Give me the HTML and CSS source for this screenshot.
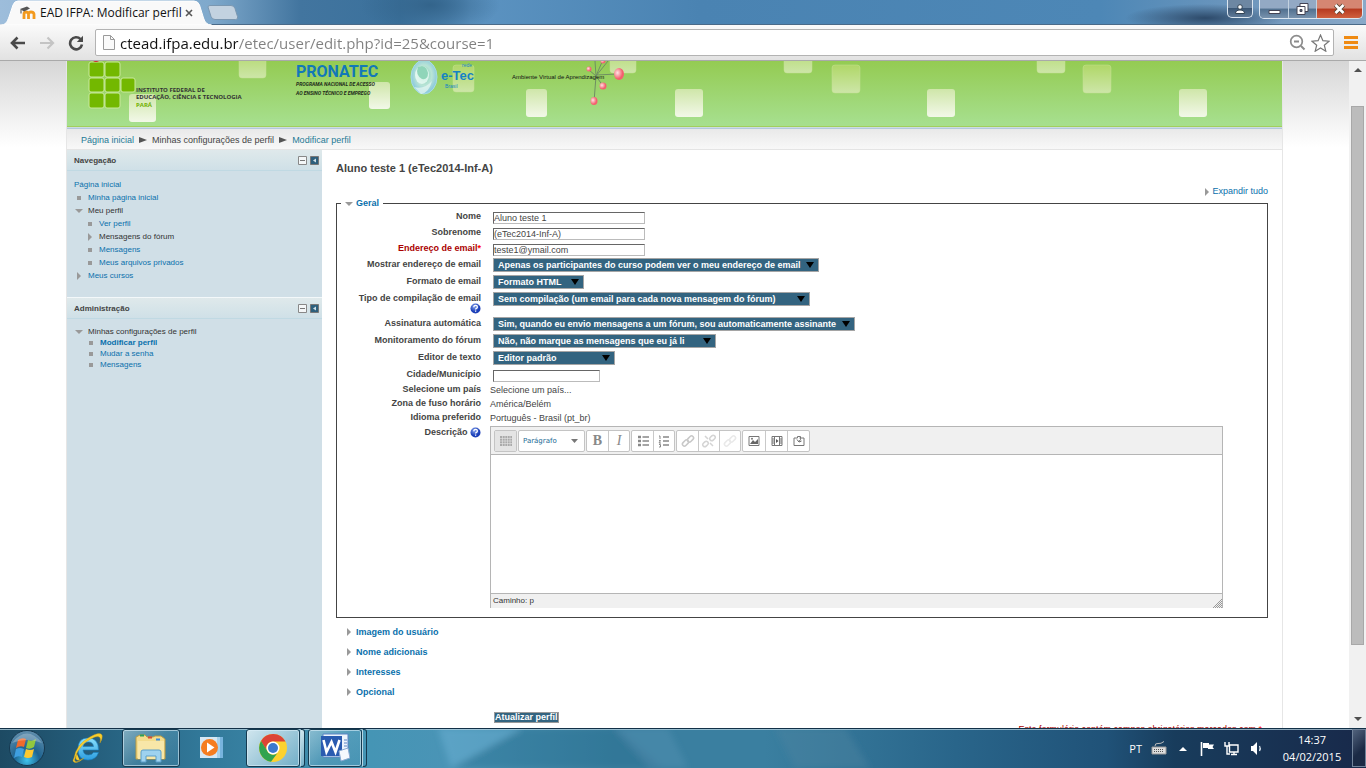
FILE: index.html
```html
<!DOCTYPE html>
<html lang="pt-BR">
<head>
<meta charset="utf-8">
<title>EAD IFPA: Modificar perfil</title>
<link rel="stylesheet" href="styles.css">
</head>
<body>
<svg class="defs" width="0" height="0" aria-hidden="true">
  <defs>
    <linearGradient id="sqSoft" x1="0" y1="0" x2="0" y2="1"><stop offset="0" stop-color="#b0d768"/><stop offset="1" stop-color="#cde6a8"/></linearGradient>
    <linearGradient id="sqBright" x1="0" y1="0" x2="0" y2="1"><stop offset="0" stop-color="#cfe6a9"/><stop offset="1" stop-color="#f2f8e8"/></linearGradient>
    <radialGradient id="pink" cx=".35" cy=".4"><stop offset="0" stop-color="#ffe3e5"/><stop offset="1" stop-color="#f4606e"/></radialGradient>
    <radialGradient id="globe" cx=".5" cy=".45"><stop offset="0" stop-color="#7fd0b4"/><stop offset=".6" stop-color="#b9e4d6"/><stop offset="1" stop-color="#8ecbdc"/></radialGradient>
    <radialGradient id="orb" cx=".5" cy=".85" r=".8"><stop offset="0" stop-color="#3fc4ee"/><stop offset=".45" stop-color="#1d6390"/><stop offset="1" stop-color="#5c8baa"/></radialGradient>
    <linearGradient id="ieBlue" x1="0" y1="0" x2="0" y2="1"><stop offset="0" stop-color="#8be0fb"/><stop offset="1" stop-color="#2b9de0"/></linearGradient>
    <radialGradient id="helpBlue" cx=".4" cy=".3"><stop offset="0" stop-color="#86a4ee"/><stop offset="1" stop-color="#1b3fb8"/></radialGradient>
    <symbol id="help" viewBox="0 0 11 11"><circle cx="5.500" cy="5.500" r="5" fill="url(#helpBlue)"/><path d="M3.700 4.200q.2-1.800 1.900-1.800t1.800 1.600q0 .9-1 1.400-.8.400-.8 1.100M5.600 7.500v1.300" fill="none" stroke="#fff" stroke-width="1.300"/></symbol>
    <symbol id="tri-down" viewBox="0 0 8 8"><path d="M0 2h8L4 6z" fill="#999"/></symbol>
    <symbol id="tri-right" viewBox="0 0 8 8"><path d="M2 0v8l4-4z" fill="#999"/></symbol>
    <symbol id="dot" viewBox="0 0 8 8"><path d="M2 2h4v4H2z" fill="#999"/></symbol>
    <symbol id="min" viewBox="0 0 9 9"><path d="M.5.500h8v8h-8z" fill="#f4f7f8" stroke="#888"/><path d="M2 4.500h5" stroke="#777"/></symbol>
    <symbol id="dock" viewBox="0 0 9 9"><path d="M.5.500h8v8h-8z" fill="#2d5f7c" stroke="#777"/><path d="M6 2.500v4l-3-2z" fill="#cfe0e8"/></symbol>
  </defs>
</svg>

<header class="titlebar">
  <div class="tab">
    <svg class="tab-shape" viewBox="0 0 213 25" preserveAspectRatio="none"><path d="M0 25c6 0 7-3 9-8l4-12q1.500-4 5-4h176q4 0 5.500 4l4 13q2 7 8 7z" fill="#f9f9f9" stroke="#fff"/></svg>
    <svg class="moodle" viewBox="0 0 16 14"><path d="M4 13V8q0-2 2-2t2.500 2v5M8.500 8q0-2 2.500-2T14 8v5" fill="none" stroke="#f39a1e" stroke-width="2.800"/><path d="M0 3L7 .5l3 2-6 3z" fill="#555"/><path d="M1 3.500v4" stroke="#444"/></svg>
    <span class="tab-title">EAD IFPA: Modificar perfil</span>
    <button class="tab-close" aria-label="Fechar guia"><svg width="8" height="8" viewBox="0 0 8 8"><path d="M1 1l6 6M7 1L1 7" stroke="#555" stroke-width="1.600"/></svg></button>
  </div>
  <button class="new-tab" aria-label="Nova guia"><svg width="32" height="15" viewBox="0 0 32 15"><path d="M1 2Q1 .5 3 .5h21q3 0 4 3l2.500 8q1 3-2 3H8q-3 0-4-3z" fill="#c3d2e0" stroke="#7a97b1"/></svg></button>
  <div class="win-buttons">
    <button class="win user" aria-label="Usuário"><svg width="12" height="12" viewBox="0 0 12 12"><circle cx="6" cy="4" r="2.300" fill="#fff" stroke="#345"/><path d="M1.500 10.500q0-3.500 4.500-3.500t4.500 3.500z" fill="#fff" stroke="#345"/></svg></button>
    <div class="win-group">
      <button class="win" aria-label="Minimizar"><svg width="13" height="12" viewBox="0 0 13 12"><path d="M1 7.500h11v3H1z" fill="#fff" stroke="#445"/></svg></button>
      <button class="win" aria-label="Restaurar"><svg width="13" height="12" viewBox="0 0 13 12"><path d="M4 .5h8v8H4z" fill="#fff" stroke="#445"/><path d="M1 3.500h8v8H1z" fill="#fff" stroke="#445"/><path d="M4 6.500h2v2H4z" fill="#567" stroke="#445"/></svg></button>
      <button class="win close" aria-label="Fechar"><svg width="13" height="12" viewBox="0 0 13 12"><path d="M2.500 2l8 8M10.500 2l-8 8" stroke="#543" stroke-width="4.500"/><path d="M2.500 2l8 8M10.500 2l-8 8" stroke="#fff" stroke-width="2.600"/></svg></button>
    </div>
  </div>
</header>

<nav class="toolbar">
  <button class="tool" aria-label="Voltar"><svg width="16" height="14" viewBox="0 0 16 14"><path d="M7.500 1.500L2 7l5.500 5.500M2.500 7H15" fill="none" stroke="#4a4a4a" stroke-width="2.600"/></svg></button>
  <button class="tool" aria-label="Avançar"><svg width="16" height="14" viewBox="0 0 16 14"><path d="M8.500 1.500L14 7l-5.500 5.500M13.500 7H1" fill="none" stroke="#c4c4c4" stroke-width="2.200"/></svg></button>
  <button class="tool" aria-label="Recarregar"><svg width="16" height="16" viewBox="0 0 16 16"><path d="M12.500 4.200A6 6 0 1 0 14 9.500" fill="none" stroke="#4a4a4a" stroke-width="2.600"/><path d="M15 .8V7H8.800z" fill="#4a4a4a"/></svg></button>
  <div class="omnibox">
    <svg width="12" height="15" viewBox="0 0 12 15"><path d="M.5.500h7l4 4v10H.5z" fill="#fafafa" stroke="#9a9a9a"/><path d="M7.500.5v4h4" fill="none" stroke="#9a9a9a"/></svg>
    <input class="url" type="text" aria-label="Endereço" value="ctead.ifpa.edu.br/etec/user/edit.php?id=25&amp;course=1">
    <svg width="17" height="17" viewBox="0 0 17 17"><circle cx="7.500" cy="7.500" r="5.800" fill="none" stroke="#8c8c8c" stroke-width="1.700"/><path d="M5 7.500h5M12 12l3.500 3.500" stroke="#8c8c8c" stroke-width="2"/></svg>
    <svg width="19" height="18" viewBox="0 0 19 18"><path d="M9.500 1l2.400 5.700 6.100.5-4.700 4 1.500 6-5.300-3.300L4.200 17.200l1.500-6-4.700-4 6.100-.5z" fill="#fff" stroke="#777" stroke-width="1.200"/></svg>
  </div>
  <button class="tool menu" aria-label="Menu"><svg width="14" height="13" viewBox="0 0 14 13"><path d="M0 1.500h14M0 6.500h14M0 11.500h14" stroke="#ef8a12" stroke-width="3"/></svg></button>
</nav>

<div class="viewport">
  <div class="page">
    <div class="container">
      <div class="banner">
        <svg class="banner-art" width="1215" height="66" viewBox="0 0 1215 66">
          <g fill="url(#sqSoft)" stroke="#c5e193" stroke-opacity=".5">
            <rect x="172" y="-11" width="27" height="28" rx="3"/><rect x="386" y="4" width="21" height="27" rx="3"/><rect x="543" y="-16" width="26" height="28" rx="3"/><rect x="717" y="-16" width="28" height="28" rx="3"/><rect x="765" y="4" width="28" height="28" rx="3"/><rect x="970" y="-16" width="28" height="28" rx="3"/><rect x="1016" y="4" width="28" height="28" rx="3"/>
          </g>
          <g fill="url(#sqBright)">
            <rect x="62" y="33" width="27" height="28" rx="3"/><rect x="302" y="21" width="21" height="27" rx="3"/><rect x="459" y="28" width="21" height="28" rx="3"/><rect x="608" y="28" width="28" height="28" rx="3"/><rect x="860" y="28" width="28" height="28" rx="3"/><rect x="1112" y="28" width="28" height="28" rx="3"/>
          </g>
          <g fill="#73b800" stroke="#c9e99c" stroke-width="1">
            <rect x="22" y="1" width="15" height="15" rx="2"/><rect x="38" y="1" width="15" height="15" rx="2"/><rect x="22" y="17" width="15" height="14" rx="2"/><rect x="38" y="17" width="15" height="14" rx="2"/><rect x="54" y="17" width="14" height="14" rx="2"/><rect x="22" y="32" width="15" height="15" rx="2"/><rect x="38" y="32" width="15" height="15" rx="2"/>
          </g>
          <path d="M26 0q3 2 6 0z" fill="#d3262c"/>
          <g class="if-text"><text x="69" y="31">INSTITUTO FEDERAL DE</text><text x="69" y="38">EDUCAÇÃO, CIÊNCIA E TECNOLOGIA</text><text x="69" y="46" class="para">PARÁ</text></g>
          <text class="pronatec" x="229" y="16">PRONATEC</text>
          <g class="pro-sub"><text x="229" y="25">PROGRAMA NACIONAL DE ACESSO</text><text x="229" y="34">AO ENSINO TÉCNICO E EMPREGO</text></g>
          <ellipse cx="357" cy="16" rx="13" ry="17" fill="url(#globe)" stroke="#a6dbe4"/>
          <ellipse cx="355" cy="14" rx="7" ry="9" fill="#f4fffb" opacity=".7"/>
          <path d="M351 6q-3 8 4 12 6 1 6-6-1-6-6-7z" fill="#8fd5b9"/>
          <path d="M347 26q10 3 18-6-3 12-11 13z" fill="#e9f9f4" opacity=".7"/>
          <text class="etec" x="374" y="19">e-Tec</text><text class="rede" x="395" y="6">rede</text><text class="rede" x="378" y="27">Brasil</text>
          <g stroke="#6f8f62" fill="none"><path d="M529 15L528 0M529 15l6-14M529 15L541 0M529 15l-7-6M529 14l22-1M529 15l7 10M529 15l-2 26"/></g>
          <g fill="url(#pink)"><circle cx="522" cy="8" r="2.500"/><circle cx="536" cy="0" r="2.500"/><ellipse cx="552" cy="13" rx="5" ry="6"/><circle cx="536" cy="25" r="3.500"/><ellipse cx="527" cy="40" rx="3.500" ry="4"/></g>
          <text class="ava" x="445" y="18">Ambiente Virtual de Aprendizagem</text>
        </svg>
      </div>
      <div class="breadcrumb"><a href="#">Página inicial</a><svg width="8" height="6" viewBox="0 0 8 6"><path d="M0 0l8 3-8 3z"/></svg><span>Minhas configurações de perfil</span><svg width="8" height="6" viewBox="0 0 8 6"><path d="M0 0l8 3-8 3z"/></svg><a href="#">Modificar perfil</a></div>
      <div class="columns">
        <aside class="sidebar">
          <section class="block nav-block">
            <h2>Navegação<span class="acts"><svg><use href="#min"/></svg><svg><use href="#dock"/></svg></span></h2>
            <ul class="tree">
              <li><a href="#">Página inicial</a></li>
              <li class="l1"><svg><use href="#dot"/></svg><a href="#">Minha página inicial</a></li>
              <li class="l1"><svg><use href="#tri-down"/></svg><span>Meu perfil</span></li>
              <li class="l2"><svg><use href="#dot"/></svg><a href="#">Ver perfil</a></li>
              <li class="l2"><svg><use href="#tri-right"/></svg><span>Mensagens do fórum</span></li>
              <li class="l2"><svg><use href="#dot"/></svg><a href="#">Mensagens</a></li>
              <li class="l2"><svg><use href="#dot"/></svg><a href="#">Meus arquivos privados</a></li>
              <li class="l1"><svg><use href="#tri-right"/></svg><a href="#">Meus cursos</a></li>
            </ul>
          </section>
          <section class="block">
            <h2>Administração<span class="acts"><svg><use href="#min"/></svg><svg><use href="#dock"/></svg></span></h2>
            <ul class="tree tight">
              <li class="l1"><svg><use href="#tri-down"/></svg><span>Minhas configurações de perfil</span></li>
              <li class="l2"><svg><use href="#dot"/></svg><a href="#"><b>Modificar perfil</b></a></li>
              <li class="l2"><svg><use href="#dot"/></svg><a href="#">Mudar a senha</a></li>
              <li class="l2"><svg><use href="#dot"/></svg><a href="#">Mensagens</a></li>
            </ul>
          </section>
        </aside>
        <main class="main">
          <h1>Aluno teste 1 (eTec2014-Inf-A)</h1>
          <div class="expand"><svg><use href="#tri-right"/></svg><a href="#">Expandir tudo</a></div>
          <form>
            <fieldset>
              <legend><svg><use href="#tri-down"/></svg><a href="#">Geral</a></legend>
              <div class="row"><label for="nome">Nome</label><input id="nome" type="text" value="Aluno teste 1"></div>
              <div class="row"><label for="sobrenome">Sobrenome</label><input id="sobrenome" type="text" value="(eTec2014-Inf-A)"></div>
              <div class="row"><label for="email" class="required">Endereço de email<span class="star">*</span></label><input id="email" type="text" value="teste1@ymail.com"></div>
              <div class="row sel"><label for="mostrar">Mostrar endereço de email</label><span class="select w320"><select id="mostrar"><option>Apenas os participantes do curso podem ver o meu endereço de email</option></select></span></div>
              <div class="row sel"><label for="formato">Formato de email</label><span class="select w90"><select id="formato"><option>Formato HTML</option></select></span></div>
              <div class="row sel tall"><label for="tipo">Tipo de compilação de email<svg class="help"><use href="#help"/></svg></label><span class="select w317"><select id="tipo"><option>Sem compilação (um email para cada nova mensagem do fórum)</option></select></span></div>
              <div class="row sel"><label for="assin">Assinatura automática</label><span class="select w357"><select id="assin"><option>Sim, quando eu envio mensagens a um fórum, sou automaticamente assinante</option></select></span></div>
              <div class="row sel"><label for="monit">Monitoramento do fórum</label><span class="select w224"><select id="monit"><option>Não, não marque as mensagens que eu já li</option></select></span></div>
              <div class="row sel"><label for="editor">Editor de texto</label><span class="select w122"><select id="editor"><option>Editor padrão</option></select></span></div>
              <div class="row city"><label for="cidade">Cidade/Município</label><input id="cidade" class="short" type="text"></div>
              <div class="row text"><b>Selecione um país</b><span>Selecione um país...</span></div>
              <div class="row text"><b>Zona de fuso horário</b><span>América/Belém</span></div>
              <div class="row text"><b>Idioma preferido</b><span>Português - Brasil (pt_br)</span></div>
              <div class="row desc"><label for="desc">Descrição <svg class="help"><use href="#help"/></svg></label>
                <div class="editor">
                  <div class="ed-tools">
                    <div class="grp"><button type="button" class="on" aria-label="Alternar barra"><svg viewBox="0 0 16 16"><path d="M2 3h12v10H2z" fill="#aaa"/><path d="M2 5.500h12M2 8h12M2 10.500h12M4.500 3v10M7 3v10M9.500 3v10M12 3v10" stroke="#e6e6e6" stroke-width=".6"/></svg></button></div>
                    <div class="grp"><button type="button" class="para">Parágrafo<svg width="7" height="4" viewBox="0 0 7 4"><path d="M0 0h7L3.500 4z" fill="#777"/></svg></button></div>
                    <div class="grp"><button type="button" class="serif"><b>B</b></button><button type="button" class="serif"><i>I</i></button></div>
                    <div class="grp"><button type="button" aria-label="Lista"><svg viewBox="0 0 16 16"><path d="M3 4h3M3 8h3M3 12h3" stroke="#888" stroke-width="2.500"/><path d="M7.500 4H14M7.500 8H14M7.500 12H14" stroke="#888" stroke-width="1.400"/></svg></button><button type="button" aria-label="Lista numerada"><svg viewBox="0 0 16 16"><path d="M3 3h1v3M3 7.500h1.500L3 10h2M3 11.500h1.500V14H3" fill="none" stroke="#888"/><path d="M7 4h6M7 8h6M7 12h6" stroke="#888" stroke-width="1.400"/></svg></button></div>
                    <div class="grp"><button type="button" aria-label="Link"><svg viewBox="0 0 16 16"><g fill="none" stroke="#c8c8c8" stroke-width="1.500"><rect x="2" y="8" width="7" height="4" rx="2" transform="rotate(-45 5.500 10)"/><rect x="7" y="4" width="7" height="4" rx="2" transform="rotate(-45 10.500 6)"/></g></svg></button><button type="button" aria-label="Remover link"><svg viewBox="0 0 16 16"><g fill="none" stroke="#d4d4d4" stroke-width="1.500"><rect x="1.500" y="9" width="6" height="4" rx="2" transform="rotate(-45 4.500 11)"/><rect x="8.500" y="3" width="6" height="4" rx="2" transform="rotate(-45 11.500 5)"/><path d="M4 3l3 3M9 10l3 3"/></g></svg></button><button type="button" aria-label="Impedir link"><svg viewBox="0 0 16 16"><g fill="none" stroke="#e9e9e9" stroke-width="1.500"><rect x="2" y="8" width="7" height="4" rx="2" transform="rotate(-45 5.500 10)"/><rect x="7" y="4" width="7" height="4" rx="2" transform="rotate(-45 10.500 6)"/></g></svg></button></div>
                    <div class="grp wide"><button type="button" aria-label="Imagem"><svg viewBox="0 0 16 16"><path d="M3 3.500h10v9H3z" fill="#fff" stroke="#777"/><path d="M4 11l3-4 2 2 3-3v5z" fill="#666"/><circle cx="6" cy="5.700" r="1" fill="#777"/></svg></button><button type="button" aria-label="Mídia"><svg viewBox="0 0 16 16"><path d="M3 3.500h10v9H3zM5.500 3.500v9M10.500 3.500v9" fill="#fff" stroke="#777"/><path d="M3 6h2M3 8h2M3 10h2M11 6h2M11 8h2M11 10h2" stroke="#777"/><path d="M7 6l2.500 2L7 10z" fill="#555"/></svg></button><button type="button" aria-label="Arquivos"><svg viewBox="0 0 16 16"><path d="M3 5h3.500V3.500h3V5H13v7.500H3z" fill="#fff" stroke="#777"/><path d="M8 8.500q2.500-2 1-4M6 6.500l2 2.500 2.500-1" fill="none" stroke="#666"/></svg></button></div>
                  </div>
                  <textarea id="desc"></textarea>
                  <div class="ed-status">Caminho: p<svg width="9" height="9" viewBox="0 0 9 9"><path d="M0 8.500h9M2 6.500h7M4 4.500h5M6 2.500h3M8 .5h1M1 7.500h8M3 5.500h6M5 3.500h4M7 1.500h2" stroke="#999" stroke-dasharray="1 1"/></svg></div>
                </div>
              </div>
            </fieldset>
            <div class="more"><svg><use href="#tri-right"/></svg><a href="#">Imagem do usuário</a></div>
            <div class="more"><svg><use href="#tri-right"/></svg><a href="#">Nome adicionais</a></div>
            <div class="more"><svg><use href="#tri-right"/></svg><a href="#">Interesses</a></div>
            <div class="more"><svg><use href="#tri-right"/></svg><a href="#">Opcional</a></div>
            <button class="submit" type="submit">Atualizar perfil</button>
            <p class="note">Este formulário contém campos obrigatórios marcados com <span class="star">*</span></p>
          </form>
        </main>
      </div>
    </div>
  </div>
  <div class="scroll" aria-hidden="true">
    <svg width="8" height="4" viewBox="0 0 8 4"><path d="M0 4h8L4 0z" fill="#505050"/></svg>
    <div class="track"><div class="thumb"></div></div>
    <svg width="8" height="4" viewBox="0 0 8 4"><path d="M0 0h8L4 4z" fill="#505050"/></svg>
  </div>
</div>

<footer class="taskbar">
  <svg class="wall" viewBox="0 0 1366 40" preserveAspectRatio="none">
    <defs><linearGradient id="tb"><stop offset="0" stop-color="#1d4a63"/><stop offset=".07" stop-color="#255f7d"/><stop offset=".15" stop-color="#32799a"/><stop offset=".27" stop-color="#4595b5"/><stop offset=".33" stop-color="#4a94b6"/><stop offset=".45" stop-color="#3a7fa0"/><stop offset=".56" stop-color="#3a7fa0"/><stop offset=".7" stop-color="#29658a"/><stop offset=".81" stop-color="#205278"/><stop offset=".86" stop-color="#183c5c"/><stop offset="1" stop-color="#18294a"/></linearGradient><filter id="soft"><feGaussianBlur stdDeviation="3"/></filter></defs>
    <path d="M0 0h1366v40H0z" fill="url(#tb)"/>
    <g filter="url(#soft)"><path d="M438 0h85l-68 40h-4z" fill="#6bb1d3" opacity=".5"/><path d="M523 0h95l45 40H450z" fill="#246584" opacity=".3"/><path d="M613 0h55l20 40h-38z" fill="#5b96b8" opacity=".35"/><path d="M775 0h70l25 40h-75z" fill="#5084a0" opacity=".4"/></g>
    <path d="M0 .5h1366" stroke="#123047"/><path d="M0 1.500h1366" stroke="#b5d1df" stroke-opacity=".75"/>
  </svg>
  <button class="task orb" aria-label="Iniciar"><svg width="38" height="38" viewBox="0 0 38 38"><circle cx="19" cy="19" r="17.500" fill="url(#orb)" stroke="#15384f"/><path d="M10 11q4-3 8-1l-2 8q-4-2-8 1z" fill="#f06a2c"/><path d="M20 11q4 2 8-1l-2 8q-4 3-8 1z" fill="#92c83e"/><path d="M8 20q4-2 8 0l-2 8q-4-2-8 1z" fill="#3f9fe0"/><path d="M18 20q4 2 8 0l-2 8q-4 2-8 0z" fill="#fcc930"/><path d="M4 14Q19-5 34 14q-15-6-30 0z" fill="#fff" opacity=".25"/></svg></button>
  <button class="task ie" aria-label="Internet Explorer"><svg width="32" height="32" viewBox="0 0 32 32"><path d="M26.500 18H11q.5 5 5.500 5 3.500 0 5-2.500h5Q24 28 16 28 6 28 6 17T16 6q10.500 0 10.500 12zM11 14.500h10.500q-.5-4.500-5-4.500T11 14.500z" fill="url(#ieBlue)" stroke="#1680c2" stroke-width=".6"/><path d="M5 22q-6 10 3 7M2 26Q4 13 17 5.500 28-1 30 3q1 3-2 8 2-8-5-6Q12 9 6 19q-3 5-2 8 2 3 8-1-7 6-10 4-2-1 0-4z" fill="#f9cf2d" stroke="#c99916" stroke-width=".4"/></svg></button>
  <button class="task open" aria-label="Explorador"><svg width="34" height="30" viewBox="0 0 34 30"><path d="M2 4l4-2h5l2 2h6l2-1h6l4 3v20H2z" fill="#f3dc8c" stroke="#b99a42"/><path d="M4 8h26v18H4z" fill="#f8e7a8"/><path d="M6 2.500h4" stroke="#2b9f58" stroke-width="2"/><path d="M14 4.500h4" stroke="#d44b38" stroke-width="2"/><path d="M22 6.500h4" stroke="#3c8ddb" stroke-width="2"/><path d="M7 29V19q0-2 2-2h16q2 0 2 2v10h-5v-6H12v6z" fill="#9ed2ef" stroke="#5b9ec9"/></svg></button>
  <button class="task wmp" aria-label="Media Player"><svg width="28" height="26" viewBox="0 0 28 26"><path d="M9 2h15v21H9z" fill="#78b4de"/><path d="M5 2h16v21H5z" fill="#a8d2ec"/><path d="M1 2h17v21H1z" fill="#d6e8f4"/><circle cx="10.500" cy="12.500" r="8.500" fill="#f57d20"/><path d="M8 7.500v10l7.500-5z" fill="#fff"/></svg></button>
  <button class="task open active" aria-label="Chrome"><svg width="30" height="30" viewBox="0 0 30 30"><circle cx="15" cy="15" r="14" fill="#fcd22f"/><path d="M3 8A14 14 0 0 1 27.500 8.500H15A6.500 6.500 0 0 0 9 18z" fill="#dc4336"/><path d="M3 8a14 14 0 0 0 10 20.800L19.500 20A6.500 6.500 0 0 1 9 17.500z" fill="#31a350"/><circle cx="15" cy="15" r="6.500" fill="#fff"/><circle cx="15" cy="15" r="5" fill="#3b79cf"/></svg></button>
  <span class="stack active"></span>
  <button class="task open word" aria-label="Word"><svg width="30" height="30" viewBox="0 0 30 30"><path d="M3 1h25v23H3z" fill="#eef4fc" stroke="#5a84c4"/><path d="M1 3h21v20H1z" fill="#2a5bb0"/><path d="M3.500 7l3 12 5-10 4 10 4-12" fill="none" stroke="#fff" stroke-width="2.600"/><path d="M24 7h3M24 10h3M24 13h3" stroke="#5a84c4"/><path d="M19 18l9-3 2 10-9 3z" fill="#f5f8fd" stroke="#8aa9d3"/></svg></button>
  <span class="stack"></span>
  <div class="tray">
    <span class="lang">PT</span>
    <svg width="16" height="14" viewBox="0 0 16 14"><path d="M1 6h14v7H1z" fill="#ddd" stroke="#999"/><path d="M3 8.500h10M3 10.500h10" stroke="#555" stroke-dasharray="1 1"/><path d="M4 5q0-3 3-2.500t6-2" fill="none" stroke="#bbb"/></svg>
    <svg class="up" width="8" height="4" viewBox="0 0 8 4"><path d="M0 4h8L4 0z" fill="#fff"/></svg>
    <svg width="16" height="15" viewBox="0 0 16 15"><path d="M2.500 1v14" stroke="#fff" stroke-width="1.600"/><path d="M4 2h6v1.500h5L13.500 6l1.500 2H9V7H4z" fill="#fff"/></svg>
    <svg width="16" height="15" viewBox="0 0 16 15"><path d="M5.500 4H14v7H5.500zM7 13.500h6M10 11v2M1 1v4h4V1M3 5v8h3" fill="none" stroke="#fff" stroke-width="1.400"/></svg>
    <svg width="15" height="15" viewBox="0 0 15 15"><path d="M2 5h2l4-4v13L4 10H2z" fill="#fff"/><path d="M10.500 5q1.500 2.500 0 5" fill="none" stroke="#dde6ee" stroke-width="1.300"/></svg>
    <div class="clock"><span>14:37</span><span>04/02/2015</span></div>
    <button class="show" aria-label="Mostrar área de trabalho"></button>
  </div>
</footer>
</body>
</html>
```
FILE: styles.css
```css
* { box-sizing: border-box; }
html, body { height: 100%; margin: 0; }
body {
  display: flex; flex-direction: column; overflow: hidden;
  font-family: "Liberation Sans", Arial, sans-serif; font-size: 9px; line-height: 13px;
  color: #444; background: #fff;
}
svg { flex: none; display: block; }
.defs { position: absolute; }
button { font: inherit; border: 0; background: none; padding: 0; margin: 0; color: inherit; display: flex; align-items: center; justify-content: center; }
a { color: #0a70ac; text-decoration: none; }

/* window title bar */
.titlebar {
  flex: none; height: 25px; display: flex; align-items: flex-start;
  background:
    radial-gradient(ellipse 80px 14px at 1205px 18px, #2d4a6a, transparent),
    radial-gradient(ellipse 70px 30px at 430px 5px, #33648b, transparent),
    linear-gradient(90deg, #9dbddb 0, #7fa9cc 210px, #42759f 300px, #3b719c 400px, #5c93c1 470px, #4a83b2 700px, #4d87b6 1100px, #7a9dc0 1300px, #8aa9c8 100%);
  box-shadow: inset 0 -1px #4a6a88;
}
.tab { position: relative; width: 213px; height: 25px; display: flex; align-items: center; padding-left: 20px; }
.tab-shape { position: absolute; left: 0; top: 0; width: 100%; height: 100%; }
.moodle { position: relative; width: 16px; height: 14px; }
.tab-title { position: relative; flex: 1; padding-left: 4px; white-space: nowrap; font: 12px/16px "Open Sans", "Noto Sans", sans-serif; color: #111; }
.tab-close { position: relative; margin-right: 20px; }
.new-tab { margin: 5px 0 0 -6px; }
.win-buttons { margin-left: auto; display: flex; gap: 6px; padding-right: 3px; }
.win { width: 28px; height: 18px; background: linear-gradient(#93a9c4 45%, #51708f 50%, #7892ad); }
.win.user { width: 26px; border: 1px solid #dbe6f0; border-top: 0; border-radius: 0 0 5px 5px; background: linear-gradient(#6d87a3 45%, #3c5877 50%, #5d7896); }
.win-group { display: flex; border: 1px solid #dbe6f0; border-top: 0; border-radius: 0 0 5px 5px; overflow: hidden; }
.win-group .win + .win { border-left: 1px solid #c3d2e0; }
.win.close { width: 46px; background: linear-gradient(#d58672 45%, #b63a20 50%, #d0603e); }

/* browser toolbar */
.toolbar { flex: none; height: 36px; display: flex; align-items: center; gap: 13px; padding: 0 7px 0 10px; background: linear-gradient(#fafafa, #e2e2e2); border-bottom: 1px solid #a9a9a9; }
.tool { width: 16px; height: 20px; }
.omnibox { flex: 1; min-width: 0; height: 27px; display: flex; align-items: center; gap: 5px; padding: 0 3px 0 7px; margin: 0 -4px 0 -2px; background: #fff; border: 1px solid #b3b3b3; border-radius: 2px; }
.url { flex: 1; min-width: 0; border: 0; padding: 0; outline: 0; height: 22px; font: 15px/22px "Open Sans", "Noto Sans", sans-serif; color: transparent; background: linear-gradient(90deg, #111 118px, #808080 118px); -webkit-background-clip: text; background-clip: text; }

/* scrolled page */
.viewport { flex: 1; min-height: 0; display: flex; overflow: hidden; }
.page { flex: 1; min-width: 0; overflow: hidden; padding: 0 66px; background: linear-gradient(#d6d6d6, #fff 86px); }
.container { background: #fff; border: solid #e6e6e6; border-width: 0 1px; min-height: 100%; }
.banner { height: 68px; overflow: hidden; background: linear-gradient(#94cb52, #a6df8d 62px, #a6df8d 65px, #a2cf5d 65px, #a2cf5d 66px, #e5efe9 66px, #b3c9dc 67px); }
.banner .if-text text { font: bold 6px "Open Sans", "Noto Sans", sans-serif; fill: #333; }
.banner .if-text .para { fill: #6fb100; }
.banner .pronatec { font: bold 16px Roboto, sans-serif; fill: #1278b8; }
.banner .pro-sub text { font: italic bold 5px Roboto, sans-serif; fill: #1d2a1a; }
.banner .etec { font: bold 13px "Liberation Sans", sans-serif; fill: #1583c4; }
.banner .rede { font: 5px "Liberation Sans", sans-serif; fill: #1583c4; }
.banner .ava { font: 6px "Liberation Sans", sans-serif; fill: #111; }
.breadcrumb { height: 21px; display: flex; align-items: center; gap: 5px; padding: 2px 14px 0; background: linear-gradient(#e9e9e9, #f8f8f8); border-bottom: 1px solid #e4e4e4; font-size: 9px; }
.breadcrumb a { color: #257a96; }
.breadcrumb svg { fill: #555; }
.columns { display: flex; align-items: stretch; }
.sidebar { width: 255px; flex: none; background: #d0dfe7; font-size: 8px; }
.block h2 { display: flex; align-items: center; height: 21px; margin: 0; padding: 0 3px 0 7px; font-size: 8px; font-weight: bold; color: #444; background: linear-gradient(#dfe9eb, #cfe0e7); border-bottom: 1px solid #c0d9e3; }
.acts { margin-left: auto; display: flex; gap: 3px; }
.acts svg { width: 9px; height: 9px; }
.nav-block { padding-bottom: 15px; border-bottom: 1px solid #f3f8fa; }
.tree { list-style: none; margin: 0; padding: 7px 0 0 7px; }
.tree li { display: flex; align-items: center; gap: 5px; height: 13px; color: #333; white-space: nowrap; }
.tree svg { width: 8px; height: 8px; }
.tree .l1 { padding-left: 1px; }
.tree .l2 { padding-left: 12px; }
.tight li { height: 11px; }
.tight .l2 { padding-left: 13px; }

/* profile form */
.main { flex: 1; min-width: 0; padding: 10px 14px 0; }
h1 { margin: 0; font-size: 11px; line-height: 16px; color: #444; }
.expand { display: flex; align-items: center; justify-content: flex-end; gap: 1px; margin-top: 10px; height: 11px; }
.expand svg, legend svg, .more svg { width: 8px; height: 8px; }
form { margin: 0; }
fieldset { margin: 0; padding: 0 44px 9px 0; border: 1px solid #444; min-width: 0; }
legend { display: flex; align-items: center; gap: 3px; margin-left: 4px; padding: 0 4px; height: 13px; font-weight: bold; }
.row { display: grid; grid-template-columns: 144px minmax(0, 1fr); column-gap: 9px; align-items: start; min-height: 16px; }
.row label, .row > b { text-align: right; font-weight: bold; line-height: 13px; }
.row input { margin: 2px 0 0 3px; width: 152px; height: 12px; padding: 0; border: 1px solid #bbb; border-top-color: #666; border-left-color: #666; font: 9px/10px "Liberation Sans", Arial, sans-serif; color: #444; background: #fff; }
.row .short { width: 107px; }
.city { min-height: 15px; }
.required { color: #a00; }
.star { color: #f00; }
.sel { min-height: 17px; }
.select { position: relative; height: 14px; margin-left: 3px; }
.select::after { content: ""; position: absolute; right: 5px; top: 4px; border: solid transparent; border-width: 6px 4px 0; border-top-color: #000; pointer-events: none; }
.select select { display: block; width: 100%; height: 14px; padding: 0 4px; margin: 0; appearance: none; border: 1px solid #a5a5a5; border-radius: 0; background: #336480; color: #fff; font: bold 9px/12px "Liberation Sans", Arial, sans-serif; }
.w320 { width: 326px; } .w90 { width: 91px; } .w317 { width: 317px; } .w357 { width: 362px; } .w224 { width: 223px; } .w122 { width: 122px; }
.help { width: 11px; height: 11px; display: inline-block; vertical-align: middle; }
.tall .help { display: block; margin: -2px 0 3px auto; }
.text { min-height: 14px; }
.text > * { line-height: 14px; }
.desc { padding-top: 1px; }
.editor { border: 1px solid #b5b5b5; border-bottom: 0; display: flex; flex-direction: column; }
.ed-tools { display: flex; gap: 1px; padding: 3px; height: 28px; background: #f0f0f0; border-bottom: 1px solid #b5b5b5; }
.grp { display: flex; height: 22px; border: 1px solid #c4c4c4; border-radius: 2px; background: #fff; overflow: hidden; }
.grp button { width: 21px; height: 20px; }
.grp.wide button { width: 22px; }
.grp button + button { border-left: 1px solid #c9c9c9; }
.grp svg { width: 16px; height: 16px; }
.grp .on { background: #e4e4e4; }
.grp .para { width: 65px; justify-content: space-between; padding: 0 6px 0 4px; font: 7px/12px "DejaVu Sans", Verdana, sans-serif; color: #246a95; }
.grp .para svg { width: 7px; height: 4px; }
.grp .serif { font: 14px/18px "Liberation Serif", serif; color: #888; }
#desc { display: block; width: 100%; height: 138px; border: 0; padding: 4px; resize: none; outline: 0; }
.ed-status { display: flex; justify-content: space-between; align-items: flex-end; height: 15px; padding-left: 2px; border-top: 1px solid #b5b5b5; background: #f0f0f0; font-size: 8px; line-height: 14px; color: #333; }
.more { display: flex; align-items: center; gap: 3px; height: 20px; padding-left: 9px; font-weight: bold; }
fieldset + .more { margin-top: 4px; }
.submit { margin: 10px 0 0 158px; height: 11px; border: 1px solid #999; background: #336480; color: #fff; font-weight: bold; }
.note { margin: 0; padding-right: 6px; text-align: right; color: #a00; line-height: 13px; }

/* scrollbar */
.scroll { flex: none; width: 17px; background: #f1f1f1; display: flex; flex-direction: column; align-items: center; padding: 7px 0; gap: 5px; }
.track { flex: 1; width: 100%; padding: 29px 2px 0; }
.thumb { height: 89%; background: #bcbcbc; border: 1px solid #a8a8a8; }

/* taskbar */
.taskbar { position: relative; flex: none; height: 40px; display: flex; align-items: center; }
.wall { position: absolute; inset: 0; width: 100%; height: 100%; }
.task, .stack, .tray { position: relative; }
.task { height: 38px; }
.orb { width: 54px; }
.ie { width: 68px; }
.open { width: 58px; border: 1px solid #153a50; border-radius: 3px; box-shadow: inset 0 0 0 1px rgba(220,240,250,.6); background: linear-gradient(135deg, rgba(200,230,240,.55), rgba(120,180,205,.3) 50%, rgba(90,150,180,.15)); }
.wmp { width: 66px; }
.active { background: linear-gradient(135deg, rgba(235,248,252,.85), rgba(150,200,220,.6)); }
.open.active, .word { width: 54px; }
.stack { width: 5px; height: 38px; margin-right: 3px; border: 1px solid #153a50; border-left-color: #b7d6e4; border-radius: 0 3px 3px 0; }
.tray { margin-left: auto; display: flex; align-items: center; height: 40px; gap: 9px; color: #fff; font: 11px/17px "Open Sans", "Noto Sans", sans-serif; }
.up { margin: 2px 3px 0 3px; }
.clock { display: flex; flex-direction: column; align-items: center; margin-left: 8px; width: 62px; }
.show { width: 14px; height: 38px; border: 1px solid #71839a; background: linear-gradient(135deg, #51627c, #1b2a45 60%); }
```
